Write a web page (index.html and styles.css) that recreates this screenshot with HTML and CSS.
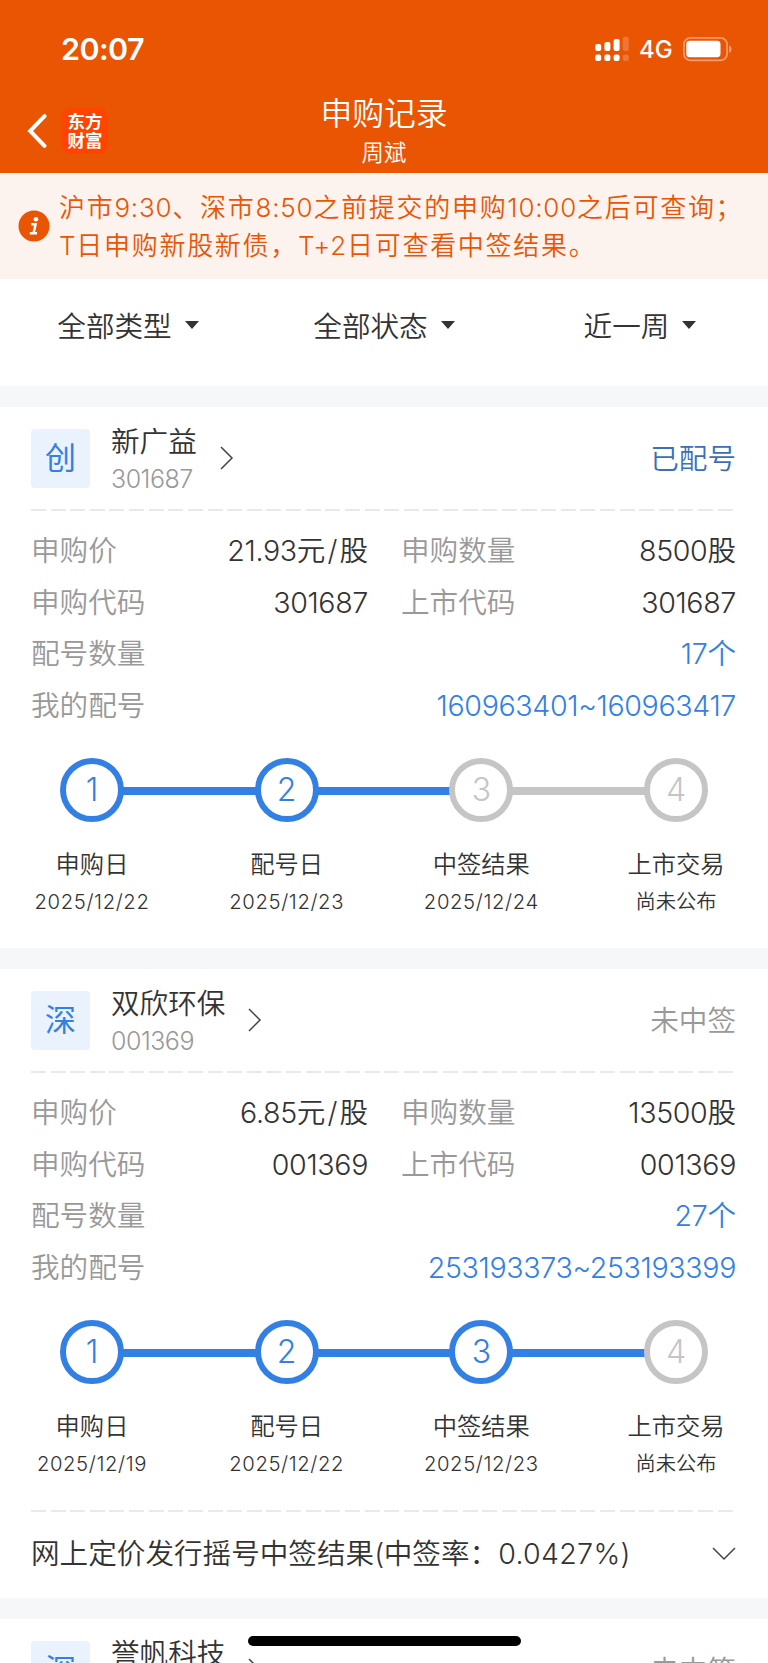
FILE: index.html
```html
<!DOCTYPE html>
<html lang="zh-CN">
  <head>
    <meta charset="UTF-8" />
    <meta name="viewport" content="width=device-width, initial-scale=1.0" />
    <title>申购记录</title>
    <link rel="stylesheet" href="styles.css">
  </head>
  <body>
    <header class="header">
      <div class="status-bar">
        <span class="time">20:07</span>
        <div class="status-icons">
          <svg class="signal" width="35" height="26" viewBox="0 0 35 26" fill="#fff">
            <rect x="0.2" y="8" width="6" height="7" rx="2" />
            <rect x="9.4" y="6" width="6" height="9" rx="2" />
            <rect x="18.6" y="3" width="6" height="12" rx="2" />
            <rect x="0.2" y="18.5" width="6" height="6.5" rx="2" />
            <rect x="9.4" y="18.5" width="6" height="6.5" rx="2" />
            <rect x="18.6" y="18.5" width="6" height="6.5" rx="2" />
            <g opacity="0.2">
              <rect x="27.8" y="0.8" width="6" height="14.2" rx="2" />
              <rect x="27.8" y="18.5" width="6" height="6.5" rx="2" />
            </g>
          </svg>
          <span class="network">4G</span>
          <svg class="battery" width="50" height="26" viewBox="0 0 50 26">
            <rect x="0.9" y="1.9" width="43.2" height="22.4" rx="6.5" fill="none" stroke="#fff" stroke-opacity="0.42" stroke-width="1.8" />
            <rect x="3.3" y="4.8" width="34.2" height="16.4" rx="3.4" fill="#fff" />
            <path d="M46 9.200c3.4 1.4 3.4 6.400 0 7.800z" fill="#fff" fill-opacity="0.45" />
          </svg>
        </div>
      </div>
      <div class="nav">
        <div class="nav-left">
          <svg class="back" width="20" height="36" viewBox="0 0 20 36" fill="none" stroke="#fff" stroke-width="4" stroke-linecap="round">
            <path d="M17.500 3.200L3.200 18l14.300 14.800" />
          </svg>
          <div class="logo">东方<br />财富</div>
        </div>
        <div class="nav-title">
          <h1>申购记录</h1>
          <p>周斌</p>
        </div>
      </div>
    </header>

    <div class="notice">
      <svg class="info" width="32" height="32" viewBox="0 0 32 32">
        <circle cx="16" cy="16" r="15.500" fill="#ea5504" />
        <circle cx="17.900" cy="9.200" r="2.300" fill="#fff" />
        <path d="M13.300 14.200h4.300L15.600 23M11.800 23.200h7.200" fill="none" stroke="#fff" stroke-width="2.500" />
      </svg>
      <p>沪市<span class="num">9:30</span>、深市<span class="num">8:50</span>之前提交的申购<span class="num">10:00</span>之后可查询；<br /><span class="num">T</span>日申购新股新债，<span class="num">T+2</span>日可查看中签结果。</p>
    </div>

    <div class="filters">
      <div class="filter">全部类型<i class="caret"></i></div>
      <div class="filter">全部状态<i class="caret"></i></div>
      <div class="filter">近一周<i class="caret"></i></div>
    </div>

    <section class="card">
      <div class="card-head">
        <span class="badge">创</span>
        <div class="stock">
          <h2>新广益</h2>
          <p class="num">301687</p>
        </div>
        <svg class="arrow" width="14" height="24" viewBox="0 0 14 24"><path d="M1 1l11 11L1 23" /></svg>
        <span class="state state-done">已配号</span>
      </div>
      <div class="dash"></div>
      <div class="info-grid">
        <div class="row"><span class="label">申购价</span><span><span class="num">21.93</span>元<span class="slash">/</span>股</span></div>
        <div class="row"><span class="label">申购数量</span><span><span class="num">8500</span>股</span></div>
        <div class="row"><span class="label">申购代码</span><span class="num">301687</span></div>
        <div class="row"><span class="label">上市代码</span><span class="num">301687</span></div>
        <div class="row wide"><span class="label">配号数量</span><span class="link"><span class="num">17</span>个</span></div>
        <div class="row wide"><span class="label">我的配号</span><span class="link num">160963401~160963417</span></div>
      </div>
      <div class="track">
        <span class="node on">1</span><span class="line on"></span>
        <span class="node on">2</span><span class="line on"></span>
        <span class="node">3</span><span class="line"></span>
        <span class="node">4</span>
      </div>
      <div class="steps">
        <div class="step"><h3>申购日</h3><p class="num">2025/12/22</p></div>
        <div class="step"><h3>配号日</h3><p class="num">2025/12/23</p></div>
        <div class="step"><h3>中签结果</h3><p class="num">2025/12/24</p></div>
        <div class="step"><h3>上市交易</h3><p>尚未公布</p></div>
      </div>
    </section>

    <section class="card">
      <div class="card-head">
        <span class="badge">深</span>
        <div class="stock">
          <h2>双欣环保</h2>
          <p class="num">001369</p>
        </div>
        <svg class="arrow" width="14" height="24" viewBox="0 0 14 24"><path d="M1 1l11 11L1 23" /></svg>
        <span class="state">未中签</span>
      </div>
      <div class="dash"></div>
      <div class="info-grid">
        <div class="row"><span class="label">申购价</span><span><span class="num">6.85</span>元<span class="slash">/</span>股</span></div>
        <div class="row"><span class="label">申购数量</span><span><span class="num">13500</span>股</span></div>
        <div class="row"><span class="label">申购代码</span><span class="num">001369</span></div>
        <div class="row"><span class="label">上市代码</span><span class="num">001369</span></div>
        <div class="row wide"><span class="label">配号数量</span><span class="link"><span class="num">27</span>个</span></div>
        <div class="row wide"><span class="label">我的配号</span><span class="link num">253193373~253193399</span></div>
      </div>
      <div class="track">
        <span class="node on">1</span><span class="line on"></span>
        <span class="node on">2</span><span class="line on"></span>
        <span class="node on">3</span><span class="line on"></span>
        <span class="node">4</span>
      </div>
      <div class="steps">
        <div class="step"><h3>申购日</h3><p class="num">2025/12/19</p></div>
        <div class="step"><h3>配号日</h3><p class="num">2025/12/22</p></div>
        <div class="step"><h3>中签结果</h3><p class="num">2025/12/23</p></div>
        <div class="step"><h3>上市交易</h3><p>尚未公布</p></div>
      </div>
      <div class="dash"></div>
      <div class="result">
        <span>网上定价发行摇号中签结果<span class="num">(</span>中签率：<span class="num rate">0.0427%)</span></span>
        <svg class="arrow" width="24" height="14" viewBox="0 0 24 14"><path d="M1 1l11 11L23 1" /></svg>
      </div>
    </section>

    <section class="card">
      <div class="card-head">
        <span class="badge">深</span>
        <div class="stock">
          <h2>誉帆科技</h2>
        </div>
        <svg class="arrow" width="14" height="24" viewBox="0 0 14 24"><path d="M1 1l11 11L1 23" /></svg>
        <span class="state">未中签</span>
      </div>
    </section>

    <div class="home-bar"></div>
  </body>
</html>
```
FILE: styles.css
```css
* {
  box-sizing: border-box;
}
html {
  height: 100%;
}
body {
  margin: 0;
  height: 1663px;
  overflow: hidden;
  background-color: #f6f7f9;
  color: #333;
  font-family: Inter, "Noto Sans CJK SC", sans-serif;
  font-size: 28.6px;
  font-weight: 350;
}
h1,
h2,
h3,
p {
  margin: 0;
  font-weight: inherit;
}
svg {
  display: block;
  flex: none;
}
.num {
  letter-spacing: -0.35px;
}

/* header */
.header {
  height: 173px;
  background-color: #ea5504;
  color: #fff;
}
.status-bar {
  display: flex;
  justify-content: space-between;
  align-items: center;
  height: 98px;
  padding: 0 35px 0 61px;
}
.time {
  padding-bottom: 2px;
  font-size: 30.5px;
  font-weight: 600;
  letter-spacing: -0.6px;
}
.status-icons {
  display: flex;
  align-items: center;
}
.network {
  width: 33px;
  margin: 2px 11px 0 9px;
  font-size: 24px;
  font-weight: 500;
  line-height: 28px;
}
.nav {
  display: grid;
  grid-template-columns: 1fr auto 1fr;
  height: 75px;
}
.nav-left {
  display: flex;
  align-items: center;
  height: 65px;
  padding-left: 27px;
}
.logo {
  width: 46px;
  height: 46px;
  margin-left: 15px;
  padding-top: 4px;
  border-radius: 9px;
  background-color: #ff4400;
  font-size: 17.5px;
  font-weight: 700;
  line-height: 19px;
  text-align: center;
}
.nav-title {
  text-align: center;
}
.nav-title h1 {
  height: 37px;
  font-size: 31.8px;
  line-height: 31px;
}
.nav-title p {
  font-size: 22.4px;
  line-height: 36px;
}

/* notice */
.notice {
  display: flex;
  height: 106px;
  padding: 16px 0 0 18px;
  background-color: #fdf3ee;
  color: #ea5504;
}
.info {
  margin-top: 21px;
}
.notice p {
  margin-left: 9px;
  font-size: 26px;
  letter-spacing: 1.7px;
  line-height: 37.5px;
  white-space: nowrap;
}
.notice .num {
  letter-spacing: 0.8px;
}

/* filters */
.filters {
  display: flex;
  height: 107px;
  background-color: #fff;
}
.filter {
  display: flex;
  flex: 1;
  justify-content: center;
  align-items: center;
  height: 91px;
}
.caret {
  margin: 1px 0 0 13px;
  border: 7px solid transparent;
  border-top: 8px solid #333;
  border-bottom: none;
}

/* card */
.card {
  height: 629px;
  margin-top: 21px;
  padding: 21px 32px 0 31px;
  background-color: #fff;
}
.card:last-of-type {
  height: auto;
}
.filters + .card {
  height: 541px;
}
.card-head {
  display: flex;
  align-items: center;
  height: 60px;
}
.badge {
  width: 59px;
  height: 59px;
  border-radius: 4px;
  background-color: #e9f2fd;
  color: #3280e4;
  font-size: 31px;
  font-weight: 400;
  line-height: 58px;
  text-align: center;
}
.stock {
  height: 60px;
  margin-left: 21px;
}
.stock h2 {
  height: 36px;
  font-size: 28.6px;
  line-height: 28px;
}
.stock p {
  color: #999;
  font-size: 25px;
  letter-spacing: -0.5px;
  line-height: 30px;
}
.arrow {
  fill: none;
  stroke: #444;
  stroke-width: 1.5;
}
.card-head .arrow {
  margin-left: 23px;
}
.state {
  margin-left: auto;
  padding-bottom: 3px;
  color: #999;
}
.state-done {
  color: #3d6fb5;
}
.dash {
  height: 2px;
  width: 702px;
  margin-top: 21px;
  background: repeating-linear-gradient(90deg, #e9e9e9 0 15px, transparent 15px 19.62px);
}

/* details */
.info-grid {
  display: grid;
  grid-template-columns: 337px 335px;
  column-gap: 33px;
  padding-top: 14px;
}
.row {
  display: flex;
  justify-content: space-between;
  height: 51.6px;
  line-height: 51.6px;
}
.wide {
  grid-column: 1 / 3;
}
.label {
  color: #999;
}
.link {
  color: #3280e4;
}
.slash {
  padding: 0 2px;
}

/* progress */
.track {
  display: flex;
  align-items: center;
  width: 648px;
  margin: 27px 0 0 29px;
}
.node {
  width: 64px;
  height: 64px;
  border: 6px solid #c5c5c5;
  border-radius: 50%;
  color: #c5c5c5;
  font-size: 32px;
  font-weight: 300;
  line-height: 52px;
  text-align: center;
}
.line {
  flex: 1;
  height: 8px;
  margin: 1px -1px 0;
  background-color: #c5c5c5;
}
.node.on {
  border-color: #3280e4;
  color: #3280e4;
}
.line.on {
  background-color: #3280e4;
}
.steps {
  display: flex;
  justify-content: space-between;
  width: 706px;
  padding-top: 23px;
}
.step {
  width: 122px;
  text-align: center;
  white-space: nowrap;
}
.step h3 {
  font-size: 24.3px;
  line-height: 38px;
}
.step p {
  font-size: 20.3px;
  line-height: 38px;
}
.step .num {
  letter-spacing: 0.6px;
}
.steps + .dash {
  margin-top: 27px;
}
.result {
  display: flex;
  justify-content: space-between;
  align-items: center;
  height: 84px;
}
.result > span {
  padding-bottom: 5px;
}
.result .rate {
  letter-spacing: 0.3px;
}

/* home indicator lies over the list */
.home-bar {
  position: fixed;
  left: 248px;
  top: 1636px;
  width: 273px;
  height: 10px;
  border-radius: 5px;
  background-color: #000;
}
```
